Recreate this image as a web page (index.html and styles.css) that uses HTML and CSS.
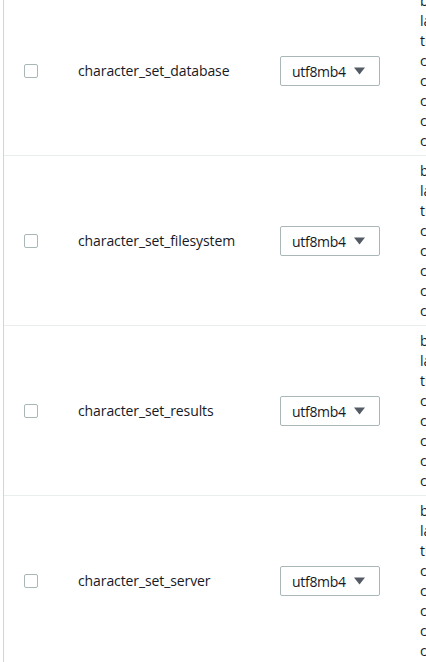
FILE: index.html
```html
<!DOCTYPE html>
<html>
<head>
<meta charset="utf-8">
<link rel="stylesheet" href="styles.css">
</head>
<body>
<div class="table">
  <div class="row">
    <div class="cell-check"><span class="checkbox"></span></div>
    <div class="cell-name">character_set_database</div>
    <div class="cell-value"><div class="select"><span>utf8mb4</span><svg class="caret" width="11" height="8" viewBox="0 0 11 8"><path d="M0 0.5H11L5.5 7.5Z"/></svg></div></div>
    <div class="cell-desc">big5<br>latin1<br>tis620<br>cp1250<br>cp1251<br>cp1256<br>cp1257<br>cp850</div>
  </div>
  <div class="row">
    <div class="cell-check"><span class="checkbox"></span></div>
    <div class="cell-name">character_set_filesystem</div>
    <div class="cell-value"><div class="select"><span>utf8mb4</span><svg class="caret" width="11" height="8" viewBox="0 0 11 8"><path d="M0 0.5H11L5.5 7.5Z"/></svg></div></div>
    <div class="cell-desc">big5<br>latin1<br>tis620<br>cp1250<br>cp1251<br>cp1256<br>cp1257<br>cp850</div>
  </div>
  <div class="row">
    <div class="cell-check"><span class="checkbox"></span></div>
    <div class="cell-name">character_set_results</div>
    <div class="cell-value"><div class="select"><span>utf8mb4</span><svg class="caret" width="11" height="8" viewBox="0 0 11 8"><path d="M0 0.5H11L5.5 7.5Z"/></svg></div></div>
    <div class="cell-desc">big5<br>latin1<br>tis620<br>cp1250<br>cp1251<br>cp1256<br>cp1257<br>cp850</div>
  </div>
  <div class="row">
    <div class="cell-check"><span class="checkbox"></span></div>
    <div class="cell-name">character_set_server</div>
    <div class="cell-value"><div class="select"><span>utf8mb4</span><svg class="caret" width="11" height="8" viewBox="0 0 11 8"><path d="M0 0.5H11L5.5 7.5Z"/></svg></div></div>
    <div class="cell-desc">big5<br>latin1<br>tis620<br>cp1250<br>cp1251<br>cp1256<br>cp1257<br>cp850</div>
  </div>
</div>
</body>
</html>
```
FILE: styles.css
```css
html, body {
  margin: 0;
  padding: 0;
  background: #ffffff;
  overflow: hidden;
}
body {
  font-family: "Open Sans", "Noto Sans", Arial, sans-serif;
  font-size: 14px;
  color: #16191f;
  padding-left: 3px;
}
.table {
  border-left: 1px solid #d1d5d5;
  margin-top: -14px;
}
.row {
  display: grid;
  grid-template-columns: 56px 202px 158px auto;
  align-items: center;
  border-bottom: 1px solid #eaeded;
  padding: 5px 0 4px;
  white-space: nowrap;
}
.cell-check {
  padding-left: 20px;
  display: flex;
}
.checkbox {
  width: 12px;
  height: 12px;
  border: 1px solid #aab7b8;
  border-radius: 2px;
  background: #fff;
}
.cell-name {
  padding-left: 18px;
  line-height: 20px;
  letter-spacing: -0.1px;
}
.cell-value {
  padding-left: 18px;
}
.select {
  height: 28px;
  width: 87px;
  border: 1px solid #aab7b8;
  border-radius: 2px;
  display: flex;
  align-items: center;
  padding-left: 11px;
  gap: 8px;
  letter-spacing: -0.3px;
}
.caret {
  fill: #545b64;
}
.cell-desc {
  line-height: 20px;
}
```
